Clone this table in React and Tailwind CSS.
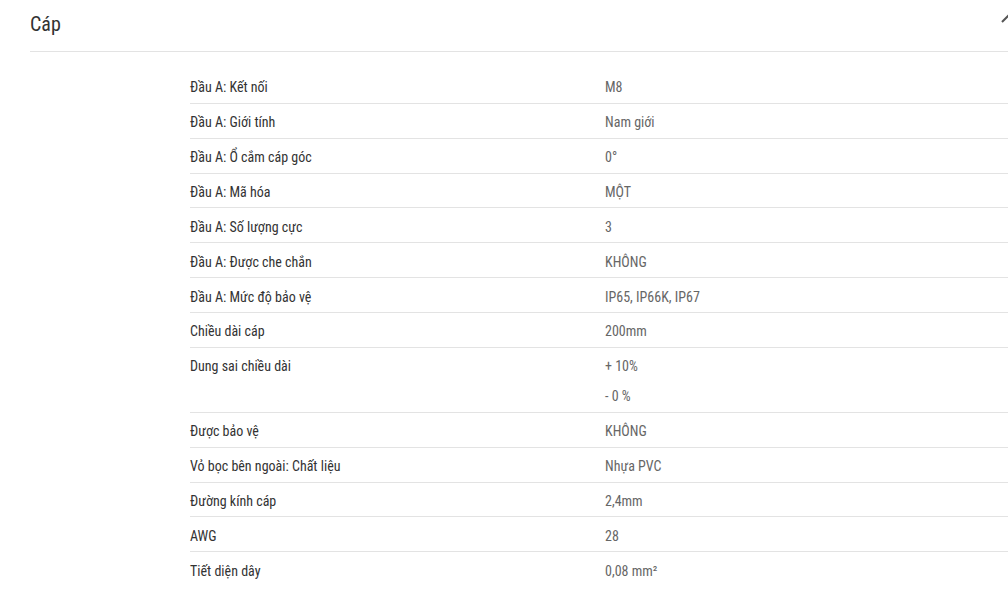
import React from "react";

const rows = [
  ["Đầu A: Kết nối", ["M8"]],
  ["Đầu A: Giới tính", ["Nam giới"]],
  ["Đầu A: Ổ cắm cáp góc", ["0°"]],
  ["Đầu A: Mã hóa", ["MỘT"]],
  ["Đầu A: Số lượng cực", ["3"]],
  ["Đầu A: Được che chắn", ["KHÔNG"]],
  ["Đầu A: Mức độ bảo vệ", ["IP65, IP66K, IP67"]],
  ["Chiều dài cáp", ["200mm"]],
  ["Dung sai chiều dài", ["+ 10%", "- 0 %"]],
  ["Được bảo vệ", ["KHÔNG"]],
  ["Vỏ bọc bên ngoài: Chất liệu", ["Nhựa PVC"]],
  ["Đường kính cáp", ["2,4mm"]],
  ["AWG", ["28"]],
  ["Tiết diện dây", ["0,08 mm²"]],
];

export default function App() {
  return (
    <div
      className="w-[1008px] h-[591px] overflow-hidden bg-white font-stretch-condensed"
      style={{ fontFamily: "Roboto, 'Liberation Sans', sans-serif" }}
    >
      <div className="w-[1100px] ml-[30px]">
        <div className="relative h-[52px] border-b border-[#e3e3e3] flex items-center">
          <span className="text-[20px] text-[#333333] leading-none -mt-[3px]">Cáp</span>
          <svg
            className="absolute left-[970px] top-[13px]"
            width="16"
            height="12"
            viewBox="0 0 16 12"
            fill="none"
          >
            <path d="M2 9 L8 3 L14 9" stroke="#555" strokeWidth="2" />
          </svg>
        </div>
        <div className="ml-[160px] mt-[17px]">
          {rows.map(([label, vals], i) => {
            const multi = vals.length > 1;
            return (
              <div
                key={i}
                className={`flex ${i < rows.length - 1 ? "border-b border-[#e3e3e3]" : ""}`}
              >
                <div
                  className={`w-[415px] flex text-[14px] text-[#333333] ${multi ? "pt-[2px]" : "h-[33.86px] items-center pt-[4px]"}`}
                >
                  {multi ? (
                    <div className="h-[30px] flex items-center pt-[4px]">{label}</div>
                  ) : (
                    label
                  )}
                </div>
                <div className={`flex flex-col ${multi ? "pt-[2px] pb-[2px]" : ""}`}>
                  {vals.map((v, j) => (
                    <div
                      key={j}
                      className={`flex items-center pt-[4px] text-[14px] text-[#666666] ${multi ? "h-[30px]" : "h-[33.86px]"}`}
                    >
                      {v}
                    </div>
                  ))}
                </div>
              </div>
            );
          })}
        </div>
      </div>
    </div>
  );
}
